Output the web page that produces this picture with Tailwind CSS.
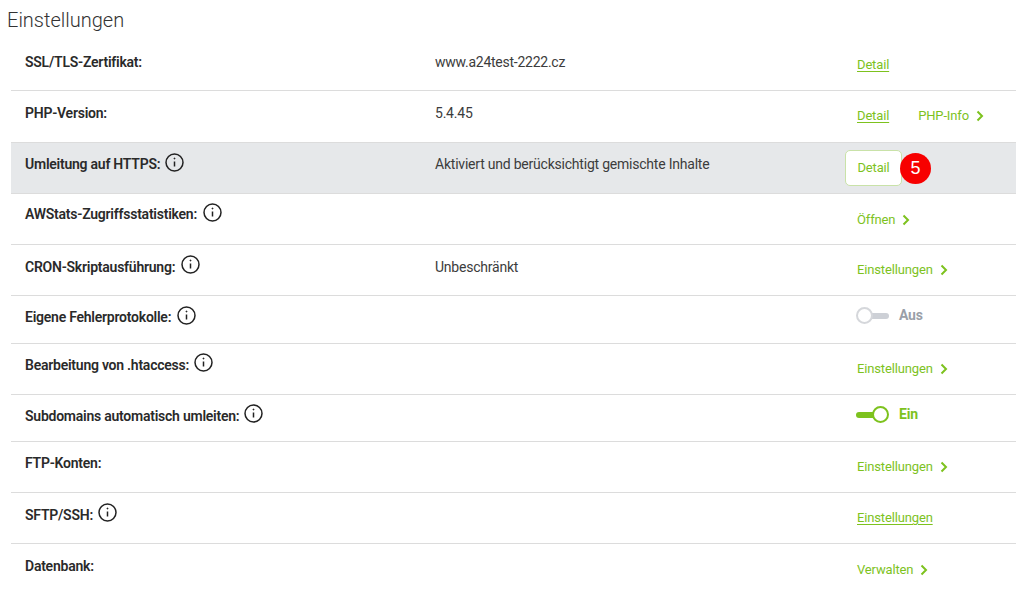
<!DOCTYPE html>
<html lang="de">
<head>
  <meta charset="UTF-8" />
  <title>Einstellungen</title>
  <script src="https://cdn.jsdelivr.net/npm/@tailwindcss/browser@4"></script>
</head>
<body class="bg-white font-['Roboto',sans-serif] text-[14px] tracking-[-0.22px] text-[#3c3c3c] overflow-hidden">
  <div class="w-[1016px] h-[600px] overflow-hidden">
    <h1 class="h-[39px] pl-[7px] pt-[7px] text-[20px] tracking-normal leading-[26px] font-light text-[#333]">Einstellungen</h1>

    <div class="ml-[11px] w-[1005px]">
      <!-- SSL -->
      <div class="h-[52px] grid grid-cols-[424px_410px_1fr] pt-[12px] border-b border-[#dcdcdc]">
        <div class="pl-[14px] pt-[1px] font-semibold tracking-[-0.24px] leading-[20px] text-[#2a2a2a]">SSL/TLS-Zertifikat:</div>
        <div class="pt-[1px] tracking-[-0.25px] leading-[20px]">www.a24test-2222.cz</div>
        <div class="pl-[12px] pt-[4px] text-[13px] tracking-[-0.15px] leading-[20px] text-[#7dc21e]"><a class="underline underline-offset-2">Detail</a></div>
      </div>
      <!-- PHP -->
      <div class="h-[52px] grid grid-cols-[424px_410px_1fr] pt-[12px] border-b border-[#dcdcdc]">
        <div class="pl-[14px] font-semibold tracking-[-0.24px] leading-[20px] text-[#2a2a2a]">PHP-Version:</div>
        <div class="leading-[20px]">5.4.45</div>
        <div class="pl-[12px] pt-[3px] flex items-start text-[13px] tracking-[-0.15px] leading-[20px] text-[#7dc21e]">
          <a class="underline underline-offset-2">Detail</a>
          <a class="ml-[29px] flex items-center">PHP-Info
            <svg class="ml-[7px]" width="8" height="12" viewBox="0 0 8 12" fill="none" stroke="#7dc21e" stroke-width="2"><path d="M1.500 1.500 6 6l-4.500 4.500"/></svg>
          </a>
        </div>
      </div>
      <!-- HTTPS -->
      <div class="h-[51px] grid grid-cols-[424px_410px_1fr] pt-[11px] bg-[#e6e8ea] border-b border-[#dcdcdc]">
        <div class="pl-[14px] flex items-start font-semibold tracking-[-0.24px] leading-[20px] text-[#2a2a2a]">Umleitung auf HTTPS:
          <svg class="ml-[5px] -mt-[1px]" width="19" height="19" viewBox="0 0 19 19" fill="none" stroke="#222" stroke-width="1.500"><circle cx="9.500" cy="9.500" r="8.500"/><path d="M9.500 8.500v5"/><circle cx="9.500" cy="5.500" r=".5" fill="#222" stroke-width="1"/></svg>
        </div>
        <div class="leading-[20px]">Aktiviert und berücksichtigt gemischte Inhalte</div>
        <div class="relative -mt-[4px]">
          <a class="block w-[57px] h-[36px] leading-[34px] text-center text-[13px] tracking-[-0.15px] text-[#7dc21e] bg-white border border-[#c9e2a8] rounded-[5px]">Detail</a>
          <span class="absolute left-[55px] top-[3px] w-[31px] h-[31px] rounded-full bg-[#f70000] text-white text-center leading-[31px] text-[18px] tracking-normal font-['Liberation_Sans',sans-serif]">5</span>
        </div>
      </div>
      <!-- AWStats -->
      <div class="h-[51px] grid grid-cols-[424px_410px_1fr] pt-[10px] border-b border-[#dcdcdc]">
        <div class="pl-[14px] flex items-start font-semibold tracking-[-0.24px] leading-[20px] text-[#2a2a2a]">AWStats-Zugriffsstatistiken:
          <svg class="ml-[6px] -mt-[1px]" width="19" height="19" viewBox="0 0 19 19" fill="none" stroke="#222" stroke-width="1.500"><circle cx="9.500" cy="9.500" r="8.500"/><path d="M9.500 8.500v5"/><circle cx="9.500" cy="5.500" r=".5" fill="#222" stroke-width="1"/></svg>
        </div>
        <div></div>
        <div class="pl-[12px] pt-[6px] text-[13px] tracking-[-0.15px] leading-[20px] text-[#7dc21e]">
          <a class="flex items-center">Öffnen
            <svg class="ml-[7px]" width="8" height="12" viewBox="0 0 8 12" fill="none" stroke="#7dc21e" stroke-width="2"><path d="M1.500 1.500 6 6l-4.500 4.500"/></svg>
          </a>
        </div>
      </div>
      <!-- CRON -->
      <div class="h-[51px] grid grid-cols-[424px_410px_1fr] pt-[12px] border-b border-[#dcdcdc]">
        <div class="pl-[14px] flex items-start font-semibold tracking-[-0.24px] leading-[20px] text-[#2a2a2a]">CRON-Skriptausführung:
          <svg class="ml-[6px] -mt-[2px]" width="19" height="19" viewBox="0 0 19 19" fill="none" stroke="#222" stroke-width="1.500"><circle cx="9.500" cy="9.500" r="8.500"/><path d="M9.500 8.500v5"/><circle cx="9.500" cy="5.500" r=".5" fill="#222" stroke-width="1"/></svg>
        </div>
        <div class="leading-[20px]">Unbeschränkt</div>
        <div class="pl-[12px] pt-[3px] text-[13px] tracking-[-0.15px] leading-[20px] text-[#7dc21e]">
          <a class="flex items-center">Einstellungen
            <svg class="ml-[7px]" width="8" height="12" viewBox="0 0 8 12" fill="none" stroke="#7dc21e" stroke-width="2"><path d="M1.500 1.500 6 6l-4.500 4.500"/></svg>
          </a>
        </div>
      </div>
      <!-- Fehlerprotokolle -->
      <div class="h-[48px] grid grid-cols-[424px_410px_1fr] pt-[11px] border-b border-[#dcdcdc]">
        <div class="pl-[14px] flex items-start font-semibold tracking-[-0.24px] leading-[20px] text-[#2a2a2a]">Eigene Fehlerprotokolle:
          <svg class="ml-[6px] -mt-[1px]" width="19" height="19" viewBox="0 0 19 19" fill="none" stroke="#222" stroke-width="1.500"><circle cx="9.500" cy="9.500" r="8.500"/><path d="M9.500 8.500v5"/><circle cx="9.500" cy="5.500" r=".5" fill="#222" stroke-width="1"/></svg>
        </div>
        <div></div>
        <div class="pl-[11px] flex items-start">
          <span class="relative block w-[33px] h-[18px]">
            <span class="absolute left-[1px] top-[6px] w-[32px] h-[6px] rounded-full bg-[#cdd0d6]"></span>
            <span class="absolute left-0 top-0 w-[17px] h-[17px] rounded-full bg-white border-2 border-[#d5d7db]"></span>
          </span>
          <span class="ml-[10px] -mt-[2px] leading-[20px] font-bold text-[14px] text-[#9a9fa8]">Aus</span>
        </div>
      </div>
      <!-- htaccess -->
      <div class="h-[51px] grid grid-cols-[424px_410px_1fr] pt-[11px] border-b border-[#dcdcdc]">
        <div class="pl-[14px] flex items-start font-semibold tracking-[-0.24px] leading-[20px] text-[#2a2a2a]">Bearbeitung von .htaccess:
          <svg class="ml-[5px] -mt-[2px]" width="19" height="19" viewBox="0 0 19 19" fill="none" stroke="#222" stroke-width="1.500"><circle cx="9.500" cy="9.500" r="8.500"/><path d="M9.500 8.500v5"/><circle cx="9.500" cy="5.500" r=".5" fill="#222" stroke-width="1"/></svg>
        </div>
        <div></div>
        <div class="pl-[12px] pt-[4px] text-[13px] tracking-[-0.15px] leading-[20px] text-[#7dc21e]">
          <a class="flex items-center">Einstellungen
            <svg class="ml-[7px]" width="8" height="12" viewBox="0 0 8 12" fill="none" stroke="#7dc21e" stroke-width="2"><path d="M1.500 1.500 6 6l-4.500 4.500"/></svg>
          </a>
        </div>
      </div>
      <!-- Subdomains -->
      <div class="h-[47px] grid grid-cols-[424px_410px_1fr] pt-[11px] border-b border-[#dcdcdc]">
        <div class="pl-[14px] flex items-start font-semibold tracking-[-0.24px] leading-[20px] text-[#2a2a2a]">Subdomains automatisch umleiten:
          <svg class="ml-[5px] -mt-[2px]" width="19" height="19" viewBox="0 0 19 19" fill="none" stroke="#222" stroke-width="1.500"><circle cx="9.500" cy="9.500" r="8.500"/><path d="M9.500 8.500v5"/><circle cx="9.500" cy="5.500" r=".5" fill="#222" stroke-width="1"/></svg>
        </div>
        <div></div>
        <div class="pl-[11px] flex items-start">
          <span class="relative block w-[33px] h-[18px]">
            <span class="absolute left-0 top-[6px] w-[32px] h-[6px] rounded-full bg-[#7dc21e]"></span>
            <span class="absolute right-0 top-0 w-[17px] h-[17px] rounded-full bg-white border-2 border-[#7dc21e]"></span>
          </span>
          <span class="ml-[10px] -mt-[2px] leading-[20px] font-bold text-[14px] text-[#7dc21e]">Ein</span>
        </div>
      </div>
      <!-- FTP -->
      <div class="h-[51px] grid grid-cols-[424px_410px_1fr] pt-[11px] border-b border-[#dcdcdc]">
        <div class="pl-[14px] font-semibold tracking-[-0.24px] leading-[20px] text-[#2a2a2a]">FTP-Konten:</div>
        <div></div>
        <div class="pl-[12px] pt-[4px] text-[13px] tracking-[-0.15px] leading-[20px] text-[#7dc21e]">
          <a class="flex items-center">Einstellungen
            <svg class="ml-[7px]" width="8" height="12" viewBox="0 0 8 12" fill="none" stroke="#7dc21e" stroke-width="2"><path d="M1.500 1.500 6 6l-4.500 4.500"/></svg>
          </a>
        </div>
      </div>
      <!-- SFTP -->
      <div class="h-[51px] grid grid-cols-[424px_410px_1fr] pt-[12px] border-b border-[#dcdcdc]">
        <div class="pl-[14px] flex items-start font-semibold tracking-[-0.24px] leading-[20px] text-[#2a2a2a]">SFTP/SSH:
          <svg class="ml-[5px] -mt-[2px]" width="19" height="19" viewBox="0 0 19 19" fill="none" stroke="#222" stroke-width="1.500"><circle cx="9.500" cy="9.500" r="8.500"/><path d="M9.500 8.500v5"/><circle cx="9.500" cy="5.500" r=".5" fill="#222" stroke-width="1"/></svg>
        </div>
        <div></div>
        <div class="pl-[12px] pt-[3px] text-[13px] tracking-[-0.15px] leading-[20px] text-[#7dc21e]"><a class="underline underline-offset-2">Einstellungen</a></div>
      </div>
      <!-- Datenbank -->
      <div class="h-[51px] grid grid-cols-[424px_410px_1fr] pt-[12px]">
        <div class="pl-[14px] font-semibold tracking-[-0.24px] leading-[20px] text-[#2a2a2a]">Datenbank:</div>
        <div></div>
        <div class="pl-[12px] pt-[4px] text-[13px] tracking-[-0.15px] leading-[20px] text-[#7dc21e]">
          <a class="flex items-center">Verwalten
            <svg class="ml-[7px]" width="8" height="12" viewBox="0 0 8 12" fill="none" stroke="#7dc21e" stroke-width="2"><path d="M1.500 1.500 6 6l-4.500 4.500"/></svg>
          </a>
        </div>
      </div>
    </div>
  </div>
</body>
</html>
